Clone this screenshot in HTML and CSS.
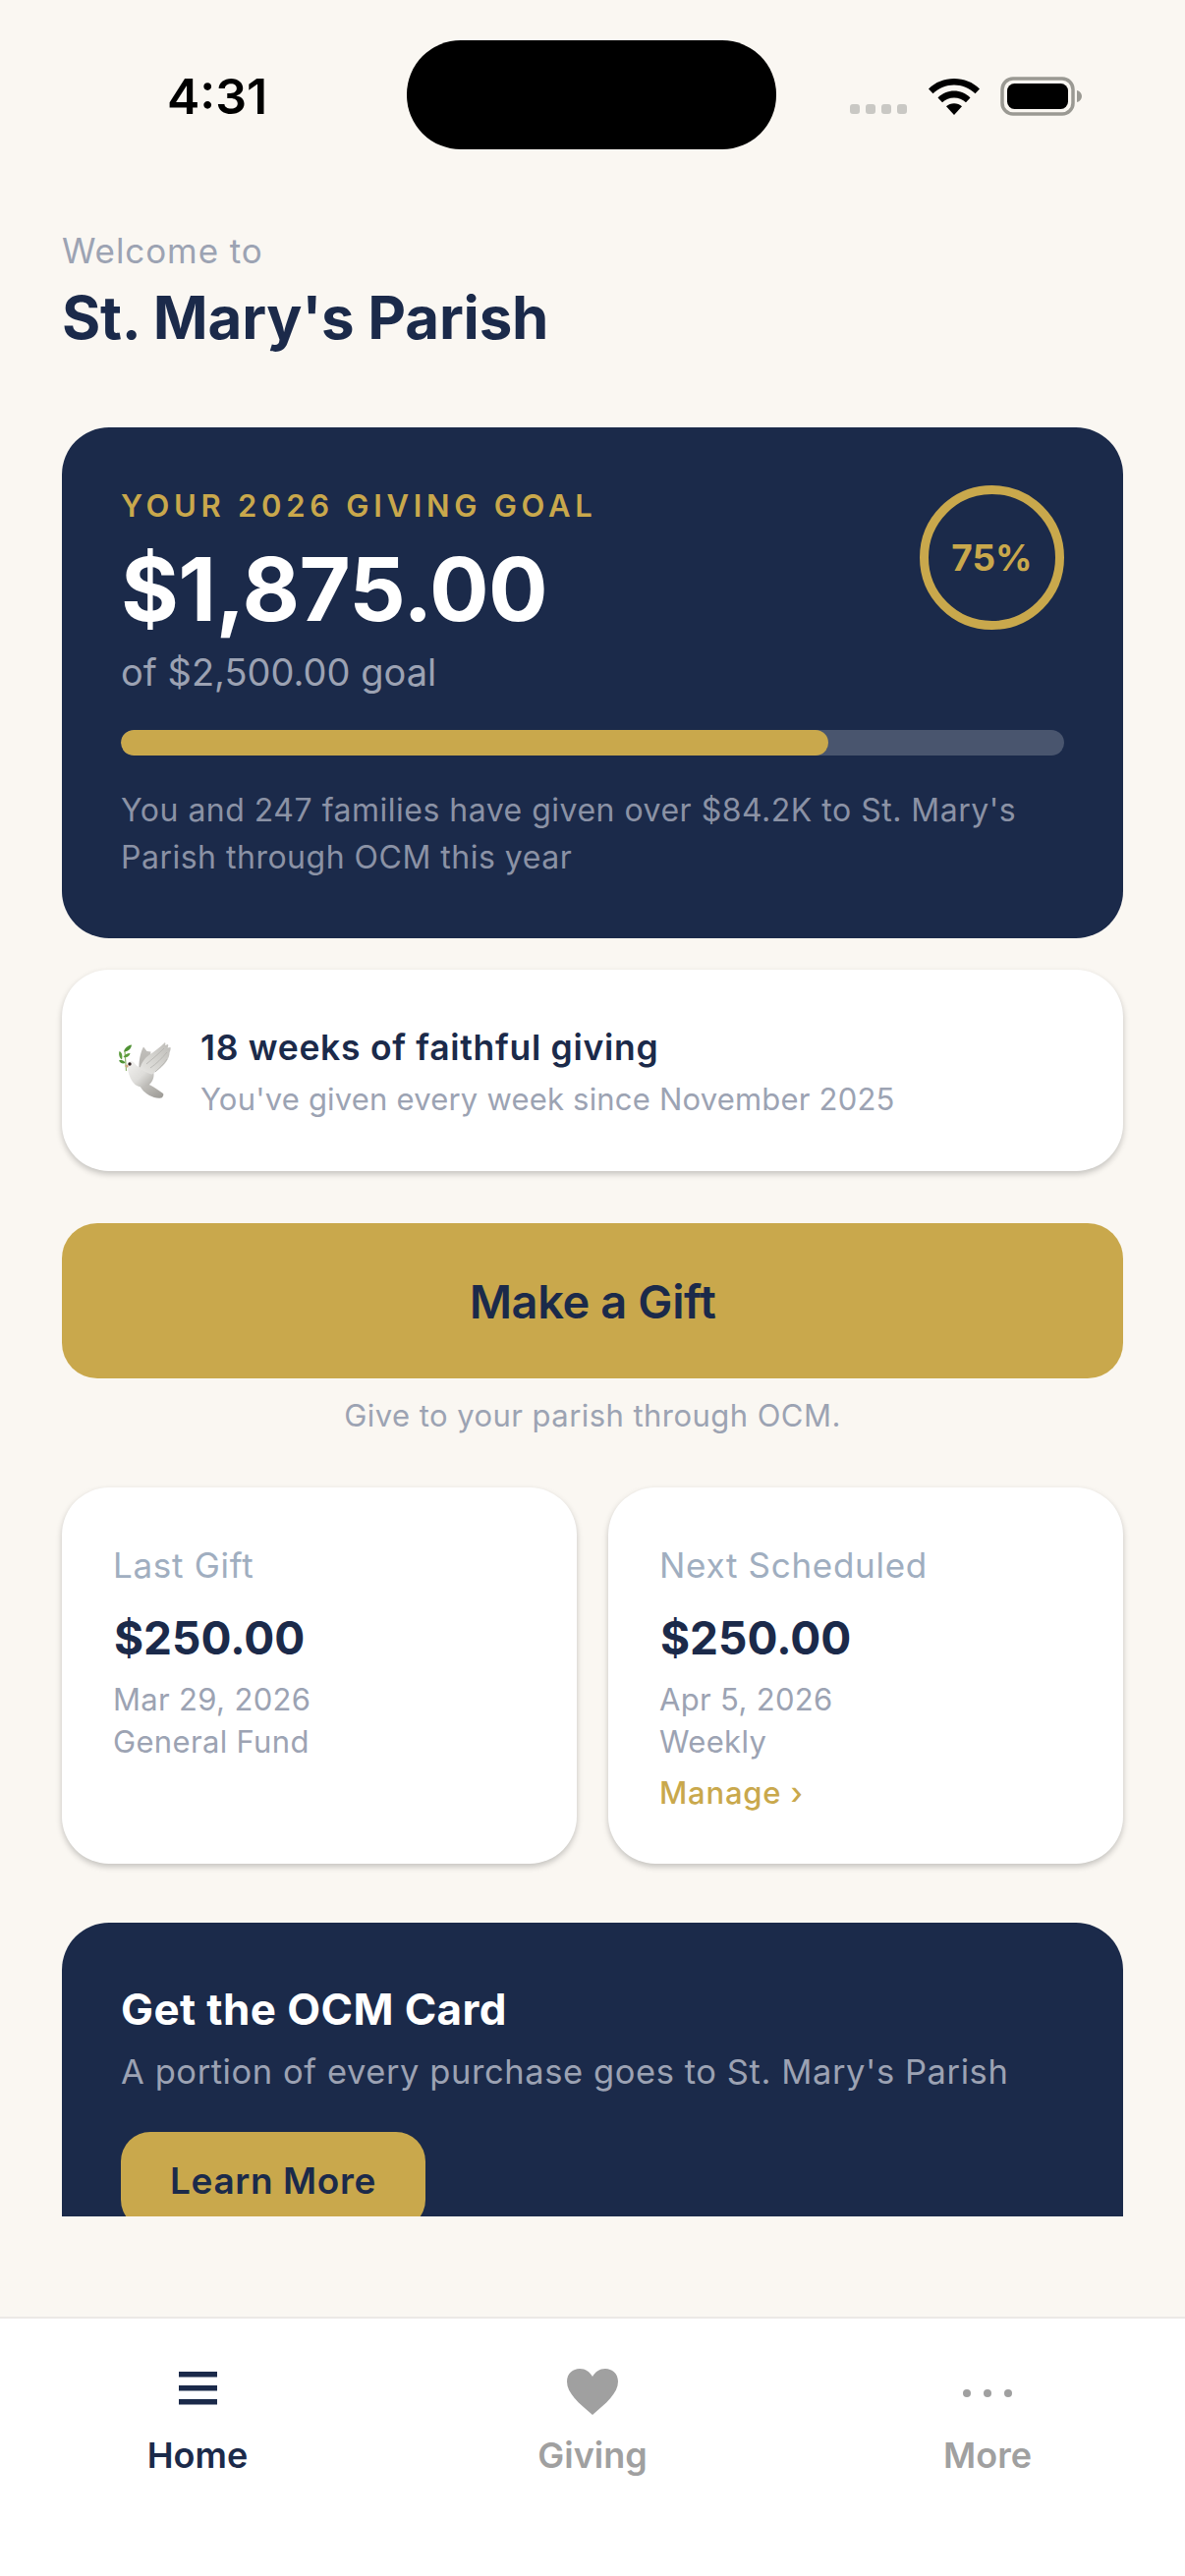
FILE: index.html
```html
<!DOCTYPE html>
<html lang="en">
<head>
<meta charset="utf-8">
<title>St. Mary's Parish</title>
<link rel="stylesheet" href="styles.css">
</head>
<body>
<div class="screen">
  <header class="status">
    <div class="time">4:31</div>
    <div class="island"></div>
    <div class="sys">
      <div class="signal"><i></i><i></i><i></i><i></i></div>
      <svg class="wifi" width="52" height="38" viewBox="0 0 52 38"><path d="M0 11.500C7 4.500 16 1 26 1s19 3.500 26 10.500l-4.500 4.800C41.500 10.500 34 7.500 26 7.500S10.500 10.500 4.500 16.300z"/><path d="M9.500 20.500C14 16 20 13.600 26 13.600s12 2.400 16.500 6.900l-4.500 4.700C34.800 22.200 30.500 20.400 26 20.400s-8.800 1.800-12 4.800z"/><path d="M18 29.300c2.200-2 5-3.100 8-3.100s5.800 1.100 8 3.100L26 38z"/></svg>
      <svg class="batt" width="84" height="40" viewBox="0 0 84 40"><rect x="2" y="2" width="72" height="36" rx="11" fill="none" stroke="#9a9993" stroke-width="3.500"/><rect x="7" y="7" width="62" height="26" rx="7.500"/><path d="M78 14c3 .8 5 3 5 6s-2 5.200-5 6z" fill="#9a9993"/></svg>
    </div>
  </header>

  <main class="content">
    <p class="welcome">Welcome to</p>
    <h1 class="parish">St. Mary's Parish</h1>

    <section class="hero">
      <div class="hero-head">
        <div>
          <div class="eyebrow">YOUR 2026 GIVING GOAL</div>
          <div class="amount">$1,875.00</div>
          <div class="goal">of $2,500.00 goal</div>
        </div>
        <div class="ring">75%</div>
      </div>
      <div class="bar"><div class="bar-fill" style="width:75%"></div></div>
      <p class="hero-note">You and 247 families have given over $84.2K to St. Mary's Parish through OCM this year</p>
    </section>

    <section class="streak">
      <svg class="dove" width="54" height="57" viewBox="0 0 54 57">
        <defs>
          <linearGradient id="wing" x1="1" y1="0" x2="0" y2="1"><stop offset="0" stop-color="#bdbbb7"/><stop offset=".5" stop-color="#d3d2ce"/><stop offset="1" stop-color="#e8e7e4"/></linearGradient>
          <linearGradient id="far" x1="0" y1="0" x2="0" y2="1"><stop offset="0" stop-color="#c2c0bc"/><stop offset="1" stop-color="#b4b2ae"/></linearGradient>
          <linearGradient id="body" x1="0" y1="0" x2="1" y2="1"><stop offset="0" stop-color="#f3f2f0"/><stop offset=".55" stop-color="#dddcd9"/><stop offset="1" stop-color="#a9a7a2"/></linearGradient>
          <linearGradient id="tail" x1="0" y1="0" x2="1" y2="1"><stop offset="0" stop-color="#cac8c4"/><stop offset="1" stop-color="#9a9893"/></linearGradient>
        </defs>
        <path d="M8.500 29C8 22 7.500 16 7 9" stroke="#8fb36b" stroke-width="1.200" fill="none"/>
        <path d="M6 9.500C7 5.500 10 3 14 2.500c-.5 4-3.500 7-8 7z" fill="#4f9234"/>
        <path d="M1.500 9c2.500 1 3.500 4.500 2.500 8.500C1.500 16 .5 12.500 1.500 9z" fill="#5c9c3c"/>
        <path d="M5.500 15c1.500-2.500 4-4 7-4-.5 3-3.500 5-7 4z" fill="#5c9c3c"/>
        <path d="M1 18.500c2.500-1 5-.5 6.500 2.500-2.500 1-5 .5-6.500-2.500z" fill="#4f9234"/>
        <path d="M26 4.500l3.500 4.500 4 .5-2 14-10 4.500c-.5-8 1-17 4.500-23.500z" fill="url(#far)"/>
        <path d="M22 43c3.500-2.500 7-1.500 11 .5 4 2 8 5 13 8.500 1 1.500-.5 4-2 4.500-3.500 1-8-.5-12-2.500-4-2.500-8-5.500-10-11z" fill="url(#tail)"/>
        <path d="M11 20c2.500-1.500 5-.5 6.500 2 2 3 5 3.500 9 3.500 5 0 9 3 10 6 .5 5-2 10-6 12.500-4 2-9 2-13-1-4-3.500-6-9-7.500-15-.5-3 0-6 1-8z" fill="url(#body)"/>
        <path d="M48 0c.5 1 .5 2 0 3l3-1c.5 1.500 0 2.500-.5 3.500l3-.5c.5 2-.5 4-1 5.500 0 3-1 5-2 7-1.500 3-4 6-7.500 9-2.500 2-5 4-8.500 6-3-1-7-2.500-12-5.500 1-6 5-11 9-14 3-2 6-4 9-6.500 2.500-2 5-4 7.500-6.500z" fill="url(#wing)"/>
        <path d="M47 6C41 12 35 17 29 22M50 10c-5 6-11 12-17 16M50 17c-3 5-8 9-12 13" stroke="#b3b1ad" stroke-width=".8" fill="none"/>
        <circle cx="12" cy="22" r="1.700" fill="#2e2020"/>
        <path d="M9.500 22.500l-2.800 1.500 3 1.800 1-1.500z" fill="#d2a77e"/>
      </svg>
      <div class="streak-text">
        <div class="streak-title">18 weeks of faithful giving</div>
        <div class="streak-sub">You've given every week since November 2025</div>
      </div>
    </section>

    <button class="gift">Make a Gift</button>
    <p class="gift-note">Give to your parish through OCM.</p>

    <section class="cards">
      <article class="card">
        <div class="card-label">Last Gift</div>
        <div class="card-amount">$250.00</div>
        <div class="card-meta">Mar 29, 2026</div>
        <div class="card-meta">General Fund</div>
      </article>
      <article class="card">
        <div class="card-label">Next Scheduled</div>
        <div class="card-amount">$250.00</div>
        <div class="card-meta">Apr 5, 2026</div>
        <div class="card-meta">Weekly</div>
        <div class="manage">Manage ›</div>
      </article>
    </section>

    <section class="promo">
      <h2 class="promo-title">Get the OCM Card</h2>
      <p class="promo-sub">A portion of every purchase goes to St. Mary's Parish</p>
      <button class="learn">Learn More</button>
    </section>
  </main>

  <nav class="tabs">
    <div class="tab tab-active">
      <svg class="tab-icon" width="39" height="50" viewBox="0 0 39 50"><rect x="0" y="4" width="39" height="5.500"/><rect x="0" y="18" width="39" height="5.500"/><rect x="0" y="32" width="39" height="5.500"/></svg>
      <span>Home</span>
    </div>
    <div class="tab">
      <svg class="tab-icon" width="52" height="50" viewBox="0 0 52 50"><path d="M26 48C12 36 0 26 0 14 0 6 6 1 13 1c6 0 10 3 13 8 3-5 7-8 13-8 7 0 13 5 13 13 0 12-12 22-26 34z"/></svg>
      <span>Giving</span>
    </div>
    <div class="tab">
      <svg class="tab-icon" width="50" height="50" viewBox="0 0 50 50"><circle cx="4" cy="26" r="4"/><circle cx="25" cy="26" r="4"/><circle cx="46" cy="26" r="4"/></svg>
      <span>More</span>
    </div>
  </nav>
</div>
</body>
</html>
```
FILE: styles.css
```css
* { box-sizing: border-box; }
html, body { margin: 0; padding: 0; }
body { background: #faf7f2; font-family: Inter, "Liberation Sans", sans-serif; color: #1b2a4a; }
p, h1, h2 { margin: 0; }
button { font-family: inherit; border: 0; padding: 0; display: block; }

.screen { width: 1206px; height: 2622px; display: flex; flex-direction: column; overflow: hidden; }

.status { flex: none; height: 228px; position: relative; }
.time { position: absolute; left: 170px; top: 68px; font-size: 50px; line-height: 60px; font-weight: 600; color: #000; }
.island { position: absolute; left: 414px; top: 41px; width: 376px; height: 111px; border-radius: 55px; background: #000; }
.sys { position: absolute; left: 865px; top: 78px; display: flex; align-items: flex-start; }
.signal { display: flex; gap: 6px; margin-top: 28px; margin-right: 22px; }
.signal i { width: 10px; height: 10px; border-radius: 3px; background: #c9c8c4; }
.wifi { margin-top: 1px; margin-right: 21px; }
.batt { display: block; }

.content { flex: none; height: 2028px; overflow: hidden; padding: 0 63px; }
.welcome { font-size: 35px; line-height: 54px; letter-spacing: .9px; color: #9ca3b3; }
.parish { font-size: 60px; line-height: 80px; font-weight: 700; letter-spacing: -.2px; margin-top: 1px; }

.hero { margin-top: 72px; height: 520px; border-radius: 48px; background: #1b2a4a; padding: 60px 60px 0; }
.hero-head { display: flex; justify-content: space-between; align-items: flex-start; }
.eyebrow { font-size: 31px; line-height: 40px; font-weight: 600; letter-spacing: 4.700px; color: #c9a84c; }
.amount { font-size: 90px; line-height: 100px; font-weight: 700; letter-spacing: -.6px; color: #fff; margin-top: 15px; }
.goal { font-size: 38px; line-height: 44px; color: #9ca2b3; margin-top: 12px; }
.ring { width: 147px; height: 147px; border: 9px solid #c9a84c; border-radius: 50%; display: flex; align-items: center; justify-content: center; font-size: 37px; font-weight: 700; color: #c9a84c; margin-top: -1px; }
.bar { height: 26px; margin-top: 37px; border-radius: 13px; background: #49556e; overflow: hidden; }
.bar-fill { height: 100%; border-radius: 13px; background: #c9a84c; }
.hero-note { margin-top: 32px; font-size: 32px; line-height: 48px; letter-spacing: .5px; color: #8b92a5; }

.streak { margin-top: 32px; height: 205px; border-radius: 48px; background: #fff; box-shadow: 0 3px 6px rgba(0,0,0,.22); display: flex; align-items: center; padding: 0 57px; gap: 30px; }
.dove { flex: none; }
.streak-text { padding-top: 4px; }
.streak-title { font-size: 35.500px; line-height: 48px; font-weight: 600; letter-spacing: .7px; }
.streak-sub { font-size: 31px; line-height: 44px; letter-spacing: .2px; color: #9ca3b3; margin-top: 6px; }

.gift { margin-top: 53px; width: 100%; height: 158px; border-radius: 36px; background: #c9a84c; color: #1b2a4a; font-size: 47px; font-weight: 600; letter-spacing: -.4px; }
.gift-note { margin-top: 18px; font-size: 31px; line-height: 40px; letter-spacing: .45px; text-align: center; color: #9ca3b3; }

.cards { margin-top: 53px; display: grid; grid-template-columns: 1fr 1fr; gap: 32px; }
.card { height: 383px; border-radius: 48px; background: #fff; box-shadow: 0 3px 6px rgba(0,0,0,.22); padding: 56px 52px 0; }
.card-label { font-size: 35px; line-height: 46px; letter-spacing: .7px; color: #a0aec0; }
.card-amount { font-size: 46px; line-height: 60px; font-weight: 700; margin-top: 21px; margin-left: 1px; }
.card-meta { font-size: 31px; line-height: 43px; letter-spacing: .33px; color: #9ca3b3; }
.card-amount + .card-meta { margin-top: 11px; }
.manage { font-size: 31px; line-height: 44px; font-weight: 500; letter-spacing: .8px; color: #c9a84c; margin-top: 9px; }

.promo { margin-top: 60px; height: 400px; border-radius: 48px; background: #1b2a4a; padding: 60px 60px 0; }
.promo-title { font-size: 44px; line-height: 56px; font-weight: 700; letter-spacing: .4px; color: #fff; }
.promo-sub { font-size: 34.500px; line-height: 48px; letter-spacing: .58px; color: #9ca2b3; margin-top: 12px; }
.learn { margin-top: 37px; width: 310px; height: 99px; border-radius: 30px; background: #c9a84c; color: #1b2a4a; font-size: 37px; font-weight: 600; letter-spacing: .6px; }

.tabs { flex: none; margin-top: auto; height: 264px; background: #fff; border-top: 2px solid #ece9e6; display: grid; grid-template-columns: repeat(3, 1fr); padding-top: 50px; }
.tab { display: flex; flex-direction: column; align-items: center; font-size: 36px; line-height: 48px; font-weight: 600; color: #a0a0a0; fill: #a0a0a0; }
.tab-active { color: #1b2a4a; fill: #1b2a4a; }
.tab-icon { display: block; margin-bottom: 15px; }
```
